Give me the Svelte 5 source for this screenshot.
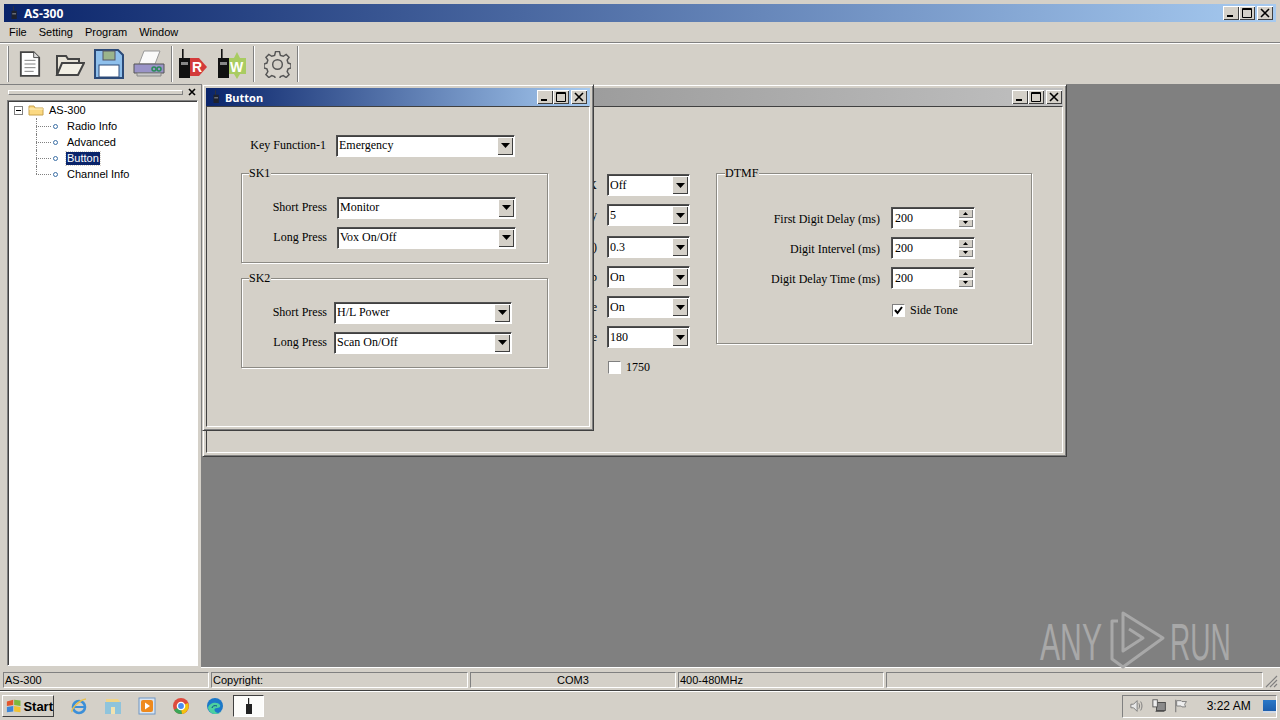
<script>
	const leftRows = [
		{ label: 'VOX', value: 'Off' },
		{ label: 'Delay', value: '5' },
		{ label: 'Time (s)', value: '0.3' },
		{ label: 'Beep', value: 'On' },
		{ label: 'Tone', value: 'On' },
		{ label: 'Time', value: '180' }
	];
	const dtmfRows = ['First Digit Delay (ms)', 'Digit Intervel (ms)', 'Digit Delay Time (ms)'];
	const treeItems = ['Radio Info', 'Advanced', 'Button', 'Channel Info'];
	const menus = ['File', 'Setting', 'Program', 'Window'];
	const sk1 = [
		{ label: 'Short Press', value: 'Monitor' },
		{ label: 'Long Press', value: 'Vox On/Off' }
	];
	const sk2 = [
		{ label: 'Short Press', value: 'H/L Power' },
		{ label: 'Long Press', value: 'Scan On/Off' }
	];
</script>

{#snippet caps()}
	<div class="caps">
		<span class="cap"><svg width="14" height="12" viewBox="0 0 14 12"><rect x="3" y="8" width="6" height="2" fill="#000" /></svg></span>
		<span class="cap"><svg width="14" height="12" viewBox="0 0 14 12"><path d="M2.5 1.5h9v9h-9z M2 2.5h10" fill="none" stroke="#000" /></svg></span>
		<span class="cap cap-x"><svg width="14" height="12" viewBox="0 0 14 12"><path d="M3 2l8 8M11 2l-8 8" stroke="#000" stroke-width="1.6" /></svg></span>
	</div>
{/snippet}

{#snippet combo(value)}
	<div class="combo">
		<span class="combo-val">{value}</span>
		<span class="combo-btn"><svg width="9" height="5" viewBox="0 0 9 5"><path d="M0 0h9L4.5 5z" fill="#000" /></svg></span>
	</div>
{/snippet}

{#snippet radio()}
	<svg class="mini" width="12" height="18" viewBox="0 0 12 18">
		<rect x="4" y="0" width="1.4" height="6" fill="#333" />
		<rect x="2" y="6" width="7" height="11" fill="#222" />
		<rect x="3" y="9" width="5" height="2" fill="#777" />
	</svg>
{/snippet}

<div class="app">
	<header class="titlebar">
		<div class="title-left big">
			{@render radio()}
			<span>AS-300</span>
		</div>
		{@render caps()}
	</header>

	<nav class="menubar">
		{#each menus as m}
			<span>{m}</span>
		{/each}
	</nav>

	<div class="toolbar">
		<span class="grip"></span>
		<svg class="tb doc" width="22" height="28" viewBox="0 0 24 30">
			<path d="M2 2h14l6 6v20H2z" fill="#fff" stroke="#444" stroke-width="2" />
			<path d="M16 2v6h6" fill="#ddd" stroke="#444" />
			<path d="M6 11h12M6 15h12M6 19h12M6 23h10" stroke="#777" />
		</svg>
		<svg class="tb" width="30" height="26" viewBox="0 0 30 26">
			<path d="M2 24V5h9l2 3h11v4" fill="#e8e4d8" stroke="#444" stroke-width="2" />
			<path d="M2 24l5-12h22l-6 12z" fill="#f2efe4" stroke="#444" stroke-width="2" />
		</svg>
		<svg class="tb" width="30" height="30" viewBox="0 0 30 30">
			<path d="M1 1h23l5 5v23H1z" fill="#8fc0ec" stroke="#2c4a78" stroke-width="2" />
			<rect x="9" y="2" width="12" height="9" fill="#9bb48c" stroke="#556" />
			<rect x="5" y="16" width="20" height="12" fill="#fff" stroke="#2c4a78" />
		</svg>
		<svg class="tb last" width="32" height="28" viewBox="0 0 32 28">
			<path d="M11 1h16l-5 13H6z" fill="#fafafa" stroke="#999" />
			<path d="M1 14h30v9H1z" fill="#9a94c8" stroke="#555" />
			<path d="M4 23h24v3H4z" fill="#c8c8c8" stroke="#888" />
			<circle cx="21" cy="19" r="2" fill="none" stroke="#2a8a5a" stroke-width="1.5" />
			<circle cx="26" cy="19" r="2" fill="none" stroke="#2a8a5a" stroke-width="1.5" />
		</svg>
		<span class="sep"></span>
		<svg class="tb" width="30" height="30" viewBox="0 0 30 30">
			<rect x="4" y="0" width="1.6" height="9" fill="#111" />
			<rect x="1" y="9" width="11" height="20" fill="#111" />
			<rect x="3" y="13" width="7" height="3" fill="#888" />
			<path d="M12 9h9l8 9-8 9h-9z" fill="#d33a3a" />
			<text x="14" y="23" class="tb-letter">R</text>
		</svg>
		<svg class="tb last" width="30" height="30" viewBox="0 0 30 30">
			<rect x="4" y="0" width="1.6" height="9" fill="#111" />
			<rect x="1" y="9" width="11" height="20" fill="#111" />
			<rect x="3" y="13" width="7" height="3" fill="#888" />
			<path d="M20 3l3 6h6v16h-6l-3 5-3-5h-5V9h5z" fill="#a9cc62" />
			<text x="13" y="23" class="tb-letter">W</text>
		</svg>
		<span class="sep wide"></span>
		<svg class="tb gear" width="27" height="27" viewBox="0 0 28 28">
			<path d="M12 2h4l1 4 3 1 3-2 3 3-2 3 1 3 3 1v4l-3 1-1 3 2 3-3 3-3-2-3 1-1 3h-4l-1-3-3-1-3 2-3-3 2-3-1-3-3-1v-4l3-1 1-3-2-3 3-3 3 2 3-1z" fill="#d8d4cc" stroke="#555" stroke-width="1.5" transform="translate(0 -1.5)" />
			<circle cx="14" cy="14" r="5" fill="#d4d0c8" stroke="#555" stroke-width="1.5" />
		</svg>
		<span class="sep"></span>
	</div>

	<div class="main">
		<aside class="sidebar">
			<div class="side-head">
				<span class="side-grip"></span>
				<svg width="8" height="8" viewBox="0 0 8 8"><path d="M1 1l6 6M7 1l-6 6" stroke="#000" stroke-width="1.6" /></svg>
			</div>
			<div class="tree">
				<div class="tree-root">
					<span class="expander"></span>
					<svg width="16" height="12" viewBox="0 0 16 12">
						<path d="M1 11V2h5l1 2h8v7z" fill="#fbd982" stroke="#c8a24c" />
						<path d="M1 5h14" stroke="#fff2c4" />
					</svg>
					<span>AS-300</span>
				</div>
				{#each treeItems as item, i}
					<div class="tree-item" class:last={i === treeItems.length - 1}>
						<span class="node"></span>
						<span class="tree-label" class:selected={item === 'Button'}>{item}</span>
					</div>
				{/each}
			</div>
		</aside>

		<div class="mdi">
			<section class="win win-back">
				<div class="win-title inactive">{@render caps()}</div>
				<div class="client back-client">
					<div class="left-col">
						{#each leftRows as row}
							<div class="left-row">
								<span class="lbl">{row.label}</span>
								{@render combo(row.value)}
							</div>
						{/each}
						<label class="check check-1750"><span class="box"></span>1750</label>
					</div>
					<div class="group dtmf">
						<span class="legend">DTMF</span>
						{#each dtmfRows as row}
							<div class="dtmf-row">
								<span class="lbl">{row}</span>
								<div class="spin">
									<span class="spin-val">200</span>
									<span class="spin-btns">
										<i><svg width="5" height="3" viewBox="0 0 5 3"><path d="M2.5 0L5 3H0z" /></svg></i>
										<i><svg width="5" height="3" viewBox="0 0 5 3"><path d="M0 0h5L2.5 3z" /></svg></i>
									</span>
								</div>
							</div>
						{/each}
						<label class="check check-side">
							<span class="box"><svg width="11" height="11" viewBox="0 0 11 11"><path d="M2 5l2.5 3L9 2" fill="none" stroke="#000" stroke-width="2" /></svg></span>
							Side Tone
						</label>
					</div>
				</div>
			</section>

			<section class="win win-front">
				<div class="win-title">
					<div class="title-left small">
						{@render radio()}
						<span>Button</span>
					</div>
					{@render caps()}
				</div>
				<div class="client front-client">
					<div class="form-row key-row">
						<span class="lbl">Key Function-1</span>
						{@render combo('Emergency')}
					</div>
					<div class="group sk">
						<span class="legend">SK1</span>
						{#each sk1 as row}
							<div class="form-row">
								<span class="lbl">{row.label}</span>
								{@render combo(row.value)}
							</div>
						{/each}
					</div>
					<div class="group sk sk2">
						<span class="legend">SK2</span>
						{#each sk2 as row}
							<div class="form-row">
								<span class="lbl">{row.label}</span>
								{@render combo(row.value)}
							</div>
						{/each}
					</div>
				</div>
			</section>
		</div>
	</div>

	<footer class="status">
		<span class="pane p1">AS-300</span>
		<span class="pane p2">Copyright:</span>
		<span class="pane p3">COM3</span>
		<span class="pane p4">400-480MHz</span>
		<span class="pane p5"></span>
		<svg class="resize" width="14" height="14" viewBox="0 0 14 14"><path d="M13 2L2 13M13 6l-7 7M13 10l-3 3" stroke="#808080" stroke-width="1.2" /></svg>
	</footer>

	<div class="taskbar">
		<button class="start">
			<svg width="17" height="16" viewBox="0 0 17 16">
				<path d="M1 3l7-2v6l-7 1z" fill="#e2562c" />
				<path d="M9 1l7 1v6l-7-1z" fill="#7cb83c" />
				<path d="M1 9l7-1v6l-7 1z" fill="#3c86d8" />
				<path d="M9 8l7 1v6l-7-1z" fill="#f2c230" />
			</svg>
			Start
		</button>
		<div class="quick">
			<svg width="18" height="18" viewBox="0 0 18 18">
				<circle cx="9" cy="10" r="6" fill="none" stroke="#3c8fd8" stroke-width="2.6" />
				<path d="M4 10h10" stroke="#3c8fd8" stroke-width="2" />
				<path d="M2 15C1 12 9 3 16 2" fill="none" stroke="#e8c050" stroke-width="1.4" />
			</svg>
			<svg width="18" height="18" viewBox="0 0 18 18">
				<path d="M1 5h16v12H1z" fill="#8fc4dc" />
				<path d="M2 2h12l2 3H2z" fill="#f0d488" />
				<rect x="7" y="10" width="4" height="7" fill="#f2e2b0" />
			</svg>
			<svg width="18" height="18" viewBox="0 0 18 18">
				<rect x="1" y="1" width="16" height="16" fill="#dbe6f2" stroke="#6f96c4" />
				<rect x="3" y="3" width="12" height="12" rx="2" fill="#ee8a1e" />
				<path d="M7 5.5l5 3.5-5 3.5z" fill="#fff" />
			</svg>
			<svg width="18" height="18" viewBox="0 0 18 18">
				<circle cx="9" cy="9" r="8" fill="#dd4b3e" />
				<path d="M9 9L2 13a8 8 0 0 0 8 4z" fill="#3aa757" />
				<path d="M9 9l7-3a8 8 0 0 1-6 11z" fill="#f4c20d" />
				<circle cx="9" cy="9" r="3.6" fill="#4a8cf0" stroke="#fff" stroke-width="1.4" />
			</svg>
			<svg width="18" height="18" viewBox="0 0 18 18">
				<circle cx="9" cy="9" r="8" fill="#1c78c8" />
				<path d="M2 11c1-5 9-7 12-3 1 2-1 3-3 3-4 0-3 4 1 5 2 0 3-1 4-2-2 4-12 5-14-3z" fill="#4cd0a0" />
				<path d="M6 11c0-2 3-3 5-2" stroke="#0a4a88" fill="none" />
			</svg>
		</div>
		<div class="task-tile">
			<svg width="8" height="16" viewBox="0 0 8 16">
				<rect x="3" y="0" width="1.2" height="6" fill="#222" />
				<rect x="1" y="6" width="6" height="10" fill="#222" />
			</svg>
		</div>
		<div class="tray">
			<svg width="16" height="16" viewBox="0 0 16 16">
				<path d="M1 6h3l4-4v12l-4-4H1z" fill="#e8e8e8" stroke="#777" />
				<path d="M10 5c1 2 1 4 0 6M12 3c2 3 2 7 0 10" fill="none" stroke="#777" />
			</svg>
			<svg width="16" height="16" viewBox="0 0 16 16">
				<rect x="5" y="4" width="10" height="9" fill="#8a8a8a" stroke="#444" />
				<rect x="1" y="1" width="5" height="8" fill="#eee" stroke="#555" />
				<path d="M4 14h10" stroke="#444" />
			</svg>
			<svg width="16" height="16" viewBox="0 0 16 16">
				<path d="M2 1v14" stroke="#666" />
				<path d="M3 2h5l1 1h5l-2 3 1 3H9L8 8H3z" fill="#eee" stroke="#777" />
			</svg>
			<span class="clock">3:22 AM</span>
			<span class="show-desk"></span>
		</div>
	</div>

	<svg class="watermark" width="230" height="70" viewBox="1030 605 230 70">
		<text transform="translate(1040 660) scale(0.58 1)" class="wm">ANY</text>
		<text transform="translate(1170 660) scale(0.54 1)" class="wm">RUN</text>
		<path d="M1118 621h-6v38l11 8 40-29-40-25v38l20-13-14-9" fill="none" stroke="#a8a8a8" stroke-width="3" stroke-linejoin="round" />
	</svg>
</div>

<style>
	:global(body) {
		margin: 0;
		background: #d4d0c8;
	}
	.app {
		position: relative;
		width: 1280px;
		height: 720px;
		overflow: hidden;
		background: #d4d0c8;
		display: flex;
		flex-direction: column;
		font-family: "Liberation Sans", "Noto Sans", sans-serif;
		font-size: 11px;
		color: #000;
	}

	/* main caption */
	.titlebar {
		height: 18px;
		margin: 4px 4px 0;
		padding: 0 3px 0 6px;
		display: flex;
		align-items: center;
		justify-content: space-between;
		background: linear-gradient(90deg, #0a246a, #a6caf0);
		flex: none;
	}
	.title-left {
		display: flex;
		align-items: center;
		gap: 5px;
		color: #fff;
		font-family: "Noto Sans", sans-serif;
		font-weight: 700;
		font-size: 11px;
	}
	.title-left.big {
		font-size: 12px;
	}
	.title-left.small {
		gap: 4px;
	}
	.mini {
		flex: none;
		height: 14px;
		width: 9px;
		opacity: 0.85;
	}
	.caps {
		display: flex;
		gap: 0;
	}
	.cap {
		width: 16px;
		height: 14px;
		background: #d4d0c8;
		box-shadow: inset 1px 1px 0 #fff, inset -1px -1px 0 #404040;
		display: flex;
		align-items: center;
		justify-content: center;
	}
	.cap-x {
		margin-left: 2px;
	}

	.menubar {
		height: 20px;
		padding: 0 9px;
		display: flex;
		align-items: center;
		gap: 12px;
		flex: none;
		border-bottom: 1px solid #808080;
		box-shadow: 0 1px 0 #fff;
	}

	.toolbar {
		height: 40px;
		margin-top: 1px;
		padding-left: 7px;
		display: flex;
		align-items: center;
		flex: none;
	}
	.grip {
		width: 0;
		height: 36px;
		margin-right: 10px;
		border-left: 1px solid #fff;
		border-right: 1px solid #808080;
	}
	.tb {
		flex: none;
		margin-right: 9px;
	}
	.tb.doc {
		margin-right: 14px;
	}
	.tb.last {
		margin-right: 6px;
	}
	.tb.gear {
		margin-right: 6px;
	}
	.tb-letter {
		font: 700 14px "Liberation Sans", sans-serif;
		fill: #fff;
	}
	.sep {
		width: 1px;
		height: 36px;
		background: #808080;
		box-shadow: 1px 0 0 #fff;
		margin-right: 6px;
		flex: none;
	}
	.sep.wide {
		margin-right: 10px;
	}

	.main {
		flex: none;
		display: flex;
		height: 584px;
		border-top: 1px solid #808080;
		box-sizing: border-box;
	}
	.sidebar {
		width: 201px;
		flex: none;
		padding: 1px 3px 2px 7px;
		box-sizing: border-box;
		display: flex;
		flex-direction: column;
	}
	.side-head {
		height: 12px;
		display: flex;
		align-items: center;
		gap: 5px;
		margin-bottom: 2px;
		padding-right: 2px;
	}
	.side-grip {
		flex: 1;
		height: 3px;
		margin-left: 1px;
		border: 1px solid;
		border-color: #fff #808080 #808080 #fff;
	}
	.tree {
		flex: 1;
		background: #fff;
		border: 1px solid;
		border-color: #808080 #fff #fff #808080;
		box-shadow: inset 1px 1px 0 #404040;
		padding-top: 1px;
	}
	.tree-root,
	.tree-item {
		height: 16px;
		display: flex;
		align-items: center;
		position: relative;
	}
	.tree-root {
		padding-left: 6px;
		gap: 5px;
	}
	.expander {
		width: 7px;
		height: 7px;
		border: 1px solid #808080;
		background: linear-gradient(#000, #000) center / 5px 1px no-repeat, #fff;
	}
	.tree-item {
		padding-left: 58px;
	}
	/* dotted connectors of the tree */
	.tree-item::before {
		content: '';
		position: absolute;
		left: 28px;
		top: 8px;
		width: 15px;
		border-top: 1px dotted #808080;
	}
	.tree-item::after {
		content: '';
		position: absolute;
		left: 28px;
		top: 0;
		height: 16px;
		border-left: 1px dotted #808080;
	}
	.tree-item.last::after {
		height: 8px;
	}
	.node {
		position: absolute;
		left: 45px;
		top: 6px;
		width: 3px;
		height: 3px;
		border-radius: 50%;
		border: 1px solid #3a6ea5;
		background: #fff;
	}
	.tree-label {
		padding: 0 1px;
		line-height: 13px;
	}
	.tree-label.selected {
		background: #0a246a;
		color: #fff;
		outline: 1px dotted #d4d0c8;
	}

	/* mdi area */
	.mdi {
		flex: 1;
		position: relative;
		background: #808080;
		box-shadow: inset 0 -1px 0 #fff;
	}
	.win {
		position: absolute;
		box-sizing: border-box;
		background: #d4d0c8;
		padding: 3px;
		display: flex;
		flex-direction: column;
		border: 1px solid;
		border-color: #d4d0c8 #404040 #404040 #d4d0c8;
		box-shadow: inset 1px 1px 0 #fff, inset -1px -1px 0 #808080;
	}
	.win-back {
		left: 1px;
		top: -1px;
		width: 865px;
		height: 373px;
	}
	.win-front {
		left: 1px;
		top: -1px;
		width: 392px;
		height: 347px;
	}
	.win-title {
		height: 18px;
		flex: none;
		display: flex;
		align-items: center;
		justify-content: space-between;
		padding: 0 3px 0 6px;
		background: linear-gradient(90deg, #0a246a, #a6caf0);
	}
	.win-title.inactive {
		justify-content: flex-end;
		padding-right: 1px;
		background: linear-gradient(90deg, #808080, #c0c0c0);
	}
	.client {
		flex: 1;
		box-sizing: border-box;
		border: 1px solid;
		border-color: #404040 #fff #fff #404040;
		font-family: "Liberation Serif", serif;
		font-size: 12px;
	}
	.lbl {
		text-align: right;
		white-space: nowrap;
	}

	.front-client {
		padding: 27px 0 0 34px;
	}
	.form-row {
		display: grid;
		grid-template-columns: 85px 179px;
		column-gap: 10px;
		align-items: center;
		height: 23px;
	}
	.key-row {
		margin-bottom: 16px;
	}
	.group {
		position: relative;
		box-sizing: border-box;
		border: 1px solid #8c8a84;
		box-shadow: inset 1px 1px 0 #fff, 1px 1px 0 #fff;
	}
	.legend {
		position: absolute;
		left: 7px;
		top: -8px;
		padding: 0 1px 0 0;
		background: #d4d0c8;
		line-height: 14px;
	}
	.sk {
		width: 307px;
		height: 90px;
		padding-top: 22px;
		display: flex;
		flex-direction: column;
		gap: 7px;
	}
	.sk2 {
		margin-top: 15px;
	}
	.sk2 .form-row {
		column-gap: 7px;
		grid-template-columns: 85px 178px;
	}

	.combo {
		height: 22px;
		box-sizing: border-box;
		display: flex;
		align-items: center;
		justify-content: space-between;
		background: #fff;
		border: 1px solid;
		border-color: #505050 #fff #fff #505050;
		box-shadow: inset 1px 1px 0 #404040;
		padding: 1px 1px 1px 2px;
	}
	.combo-val {
		white-space: nowrap;
	}
	.combo-btn {
		width: 16px;
		height: 18px;
		flex: none;
		background: #d4d0c8;
		box-shadow: inset 1px 1px 0 #fff, inset -1px -1px 0 #404040;
		display: flex;
		align-items: center;
		justify-content: center;
	}

	.back-client {
		display: flex;
		gap: 26px;
		padding-top: 66px;
	}
	.left-col {
		width: 483px;
		flex: none;
		padding-top: 1px;
		display: flex;
		flex-direction: column;
		gap: 8px;
	}
	.left-row {
		display: grid;
		grid-template-columns: 390px 83px;
		column-gap: 10px;
		align-items: center;
	}
	.left-row:nth-child(3) {
		margin-top: 2px;
	}
	.check {
		display: flex;
		align-items: center;
		gap: 5px;
	}
	.box {
		width: 11px;
		height: 11px;
		flex: none;
		background: #fff;
		border: 1px solid;
		border-color: #808080 #fff #fff #808080;
		display: flex;
	}
	.check-1750 {
		margin: 4px 0 0 401px;
	}
	.dtmf {
		width: 316px;
		height: 171px;
		padding-top: 33px;
		display: flex;
		flex-direction: column;
		gap: 8px;
	}
	.dtmf .legend {
		left: 8px;
	}
	.dtmf-row {
		display: grid;
		grid-template-columns: 163px 84px;
		column-gap: 11px;
		align-items: center;
	}
	.dtmf-row .lbl {
		padding-top: 3px;
	}
	.spin {
		height: 22px;
		box-sizing: border-box;
		display: flex;
		justify-content: space-between;
		background: #fff;
		border: 1px solid;
		border-color: #505050 #fff #fff #505050;
		box-shadow: inset 1px 1px 0 #404040;
		padding: 1px;
	}
	.spin-val {
		padding: 2px 0 0 2px;
	}
	.spin-btns {
		width: 15px;
		display: flex;
		flex-direction: column;
		gap: 1px;
	}
	.spin-btns i {
		flex: 1;
		background: #d4d0c8;
		box-shadow: inset 1px 1px 0 #fff, inset -1px -1px 0 #808080;
		display: flex;
		align-items: center;
		justify-content: center;
	}
	.check-side {
		margin: 6px 0 0 175px;
	}

	/* status bar */
	.status {
		height: 23px;
		flex: none;
		box-sizing: border-box;
		padding: 4px 2px 2px 3px;
		display: flex;
		gap: 2px;
		position: relative;
		border-bottom: 1px solid #404040;
	}
	.pane {
		box-sizing: border-box;
		height: 16px;
		line-height: 14px;
		padding: 0 1px;
		border: 1px solid;
		border-color: #808080 #fff #fff #808080;
		white-space: nowrap;
	}
	.p1 { width: 206px; }
	.p2 { width: 257px; }
	.p3 { width: 206px; text-align: center; }
	.p4 { width: 206px; }
	.p5 { width: 377px; }
	.resize {
		position: absolute;
		right: 2px;
		bottom: 2px;
	}

	/* windows taskbar */
	.taskbar {
		flex: 1;
		display: flex;
		align-items: center;
		border-top: 1px solid #fff;
		padding: 0 3px 0 2px;
	}
	.start {
		width: 52px;
		height: 22px;
		padding: 0 0 0 3px;
		display: flex;
		align-items: center;
		gap: 2px;
		background: #d4d0c8;
		border: 1px solid;
		border-color: #fff #404040 #404040 #fff;
		font: 700 13px "Liberation Sans", sans-serif;
		color: #000;
	}
	.quick {
		display: flex;
		gap: 16px;
		margin-left: 16px;
	}
	.task-tile {
		width: 31px;
		height: 22px;
		margin-left: 9px;
		background: #fcfcfa;
		border: 1px solid;
		border-color: #404040 #fff #fff #404040;
		box-sizing: border-box;
		display: flex;
		align-items: center;
		justify-content: center;
	}
	.tray {
		margin-left: auto;
		width: 155px;
		height: 23px;
		box-sizing: border-box;
		display: flex;
		align-items: center;
		gap: 8px;
		padding-left: 7px;
		border: 1px solid;
		border-color: #808080 #fff #fff #808080;
	}
	.clock {
		margin-left: 10px;
		font-size: 12px;
		white-space: nowrap;
	}
	.show-desk {
		width: 15px;
		height: 13px;
		margin-left: 4px;
		background: linear-gradient(#2a78c8, #1a5aa8);
		box-shadow: inset 0 -2px 0 #cfd8e4;
	}

	.watermark {
		position: absolute;
		left: 1030px;
		top: 605px;
		pointer-events: none;
	}
	.wm {
		font: 400 52px "Liberation Sans", sans-serif;
		fill: #a8a8a8;
	}
</style>
